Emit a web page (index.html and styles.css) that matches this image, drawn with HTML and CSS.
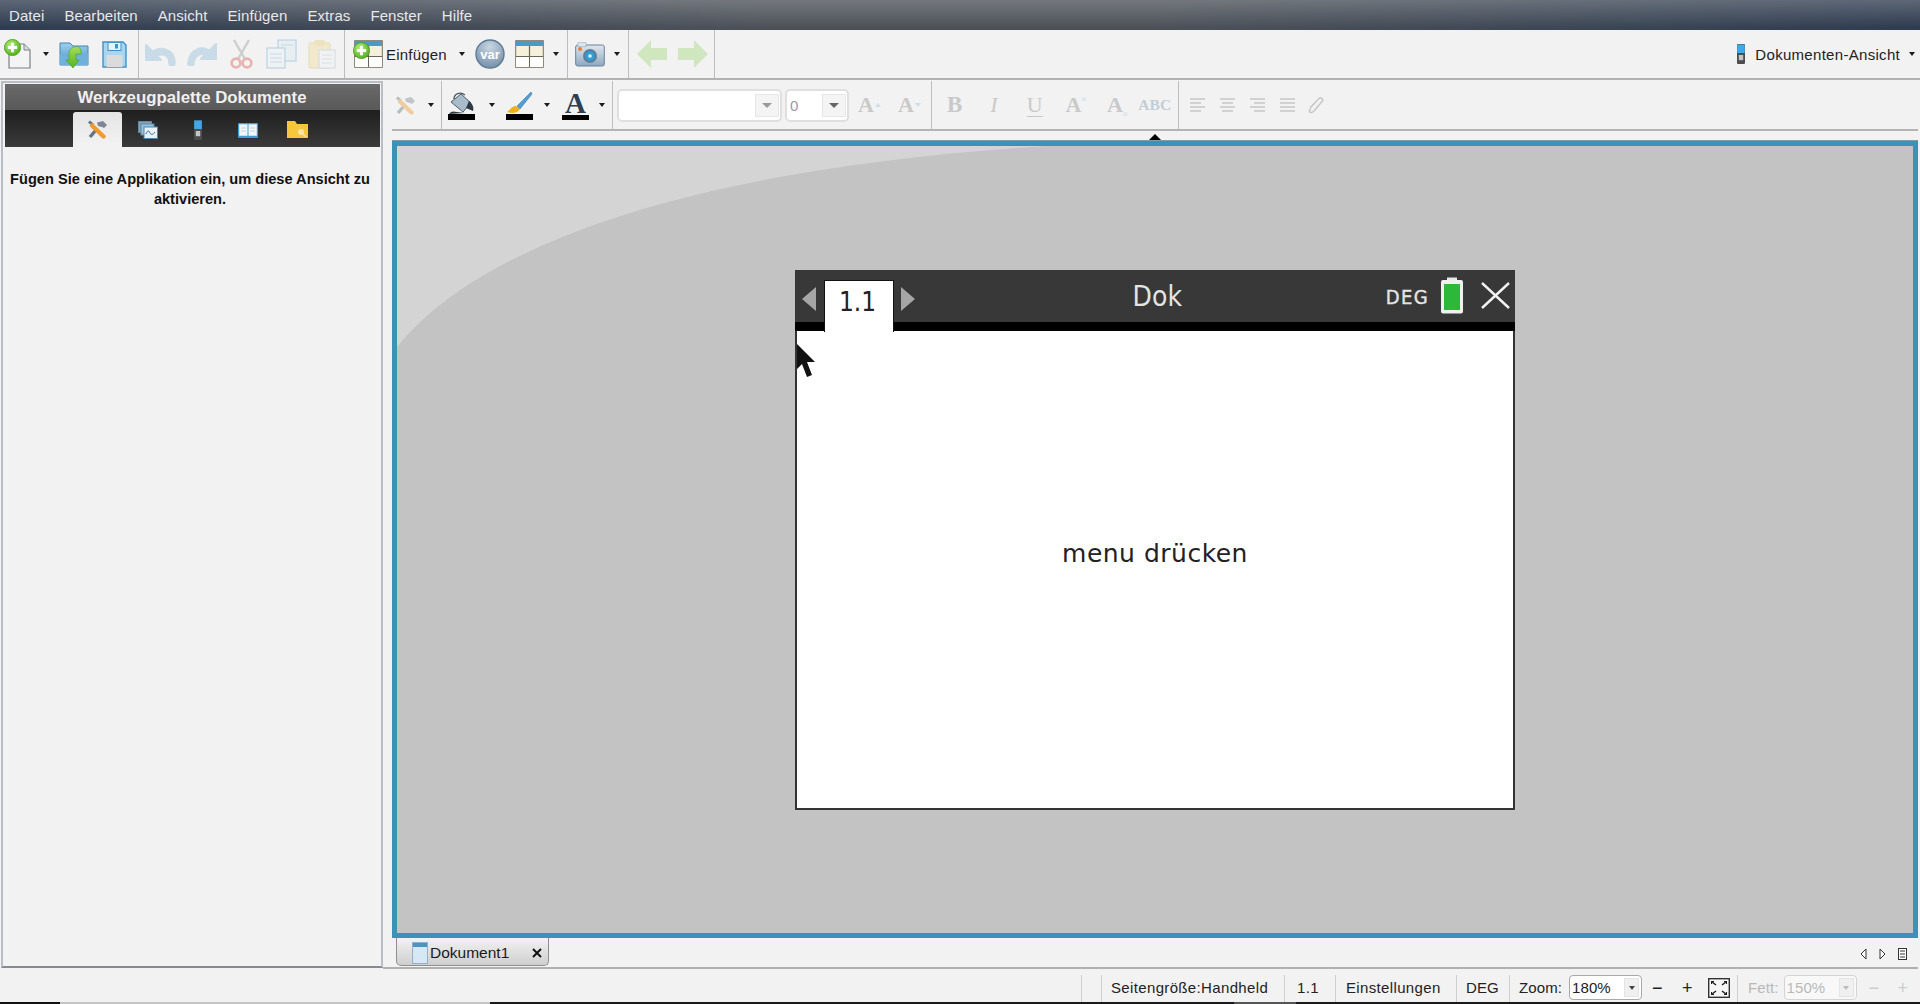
FILE: index.html
```html
<!DOCTYPE html>
<html lang="de">
<head>
<meta charset="utf-8">
<title>TI-Nspire Dokument</title>
<link rel="stylesheet" href="styles.css">
</head>
<body>
<svg class="defs" aria-hidden="true">
  <defs>
    <radialGradient id="gPlus" cx=".4" cy=".35" r=".7"><stop offset="0" stop-color="#b6ee7a"/><stop offset="1" stop-color="#4fae1d"/></radialGradient>
    <linearGradient id="gFolder" x1="0" y1="0" x2="0" y2="1"><stop offset="0" stop-color="#9fd0ec"/><stop offset="1" stop-color="#4392c6"/></linearGradient>
    <linearGradient id="gGreen" x1="0" y1="0" x2="0" y2="1"><stop offset="0" stop-color="#a6dc5e"/><stop offset="1" stop-color="#53b420"/></linearGradient>
    <radialGradient id="gVar" cx=".5" cy=".25" r=".8"><stop offset="0" stop-color="#c9d6e2"/><stop offset="1" stop-color="#6f8ba6"/></radialGradient>
    <linearGradient id="gCam" x1="0" y1="0" x2="0" y2="1"><stop offset="0" stop-color="#dfe7ee"/><stop offset="1" stop-color="#8ea8bf"/></linearGradient>
    <symbol id="plus" viewBox="0 0 16 16"><circle cx="8" cy="8" r="7.6" fill="url(#gPlus)" stroke="#4b9a1c" stroke-width=".8"/><path d="M8 3.600v8.800M3.600 8h8.800" stroke="#fff" stroke-width="2.600"/></symbol>
    <symbol id="grid" viewBox="0 0 29 28"><rect x=".7" y=".7" width="27.600" height="26.600" fill="#f5f0dc" stroke="#77705e"/><rect x="1" y="1" width="27" height="5" fill="#4a9ac8"/><path d="M1 16.500h27M14.500 6v21" stroke="#6b6553" stroke-width="1.200"/><rect x="1" y="17" width="13" height="10" fill="#fff"/><rect x="15" y="17" width="13" height="10" fill="#fff"/></symbol>
    <symbol id="device" viewBox="0 0 10 20"><rect x="1" y="0" width="8" height="20" rx="1" fill="#4d4d4d"/><rect x="1.200" y=".5" width="7.600" height="8.500" fill="#3fa9e6"/><rect x="2.800" y="11" width="4.400" height="5.200" fill="#c4c4c4"/></symbol>
    <symbol id="tools" viewBox="0 0 21 19"><path d="M3 17 9 10" stroke="#66737e" stroke-width="3.400"/><path d="M10 2.500 16 1l4 4-3 3-2-1-4-1z" fill="#7b8893"/><path d="M1 2.500 3 .5 7 4 5 6z" fill="#66737e"/><path d="M5 5.500 16.500 16.500" stroke="#ee9a2e" stroke-width="4.400" stroke-linecap="round"/></symbol>
  </defs>
</svg>

<nav class="menubar">
  <span class="menu">Datei</span><span class="menu">Bearbeiten</span><span class="menu">Ansicht</span><span class="menu">Einfügen</span><span class="menu">Extras</span><span class="menu">Fenster</span><span class="menu">Hilfe</span>
</nav>

<div class="toolbar top">
  <div class="group g1">
    <svg class="ic" width="27" height="30" viewBox="0 0 27 30"><path d="M5 5h15l6 6v18H5z" fill="#f4f4f4" stroke="#7d8186" stroke-width="1.200"/><path d="M20 5v6h6" fill="#dcdcdc" stroke="#7d8186"/><use href="#plus" x="0" y="0" width="17" height="17"/></svg>
    <span class="arr ml12"></span>
    <svg class="ic ml10" width="30" height="28" viewBox="0 0 30 28"><path d="M1 3h10l3 3h15v19H1z" fill="url(#gFolder)" stroke="#3f86b6"/><path d="M1 14c8 4 18 3 28-1v12H1z" fill="#6eb1da"/><path d="M15 7c5-2 8 2 7 7l-5 0v6h3l-6 8-7-8h3v-7c0-3 2-5 5-6z" fill="url(#gGreen)" stroke="#4a9f1e" stroke-width=".6"/></svg>
    <svg class="ic ml13" width="25" height="27" viewBox="0 0 25 27"><path d="M1 1h20l3 3v22H1z" fill="#a9d5f0" stroke="#3f92c9" stroke-width="1.400"/><rect x="6" y="1.500" width="13" height="8" fill="#e6f2fa" stroke="#3f92c9"/><rect x="13" y="3" width="3" height="4.500" fill="#3f92c9"/><rect x="4.500" y="14" width="16" height="12" fill="#dbdbdb"/></svg>
  </div>
  <div class="group g2 disabled">
    <svg class="ic" width="32" height="24" viewBox="0 0 32 24"><path d="M27 21C27 9 15 7 8 13" fill="none" stroke="#8fbdd6" stroke-width="7.500" stroke-linecap="round"/><path d="M1 3v15h15z" fill="#8fbdd6" stroke="#8fbdd6" stroke-linejoin="round" stroke-width="2"/></svg>
    <svg class="ic ml10" width="30" height="24" viewBox="0 0 30 24"><path d="M4 21C5 10 15 6 22 12" fill="none" stroke="#8fbdd6" stroke-width="7.500" stroke-linecap="round"/><path d="M29 2v15H14z" fill="#8fbdd6" stroke="#8fbdd6" stroke-linejoin="round" stroke-width="2"/></svg>
    <svg class="ic ml13 faint" width="23" height="30" viewBox="0 0 23 30"><path d="M4 1l11 19M19 1 8 20" stroke="#8d8d8d" stroke-width="2.400"/><circle cx="6" cy="24" r="4.400" fill="none" stroke="#d8473a" stroke-width="2.600"/><circle cx="17" cy="24" r="4.400" fill="none" stroke="#d8473a" stroke-width="2.600"/></svg>
    <svg class="ic ml13" width="31" height="30" viewBox="0 0 31 30"><rect x="12" y="1" width="18" height="21" fill="#dcebf5" stroke="#6fa8cf" stroke-width="1.200"/><rect x="1" y="9" width="18" height="20" fill="#edf4f9" stroke="#6fa8cf" stroke-width="1.200"/><path d="M4 15h12M4 19h12M4 23h12M15 6h12" stroke="#8ab6d4"/></svg>
    <svg class="ic ml11" width="28" height="30" viewBox="0 0 28 30"><rect x="1" y="4" width="21" height="25" rx="1" fill="#f4dc9a" stroke="#d9bd6a"/><rect x="6" y="1" width="11" height="6" rx="2" fill="#e8cf85"/><rect x="11" y="11" width="16" height="18" fill="#eef3f6" stroke="#a8bccb"/><path d="M14 16h10M14 20h10M14 24h10" stroke="#b8c8d4"/></svg>
  </div>
  <div class="group g3">
    <svg class="ic" width="30" height="29" viewBox="0 0 30 29"><svg x="1" y="0" width="29" height="28"><use href="#grid" width="29" height="28"/></svg><use href="#plus" x="0" y="2" width="17" height="17"/></svg>
    <span class="tlabel ml3">Einfügen</span>
    <span class="arr ml12"></span>
    <svg class="ic ml10" width="30" height="30" viewBox="0 0 30 30"><circle cx="15" cy="15" r="14" fill="url(#gVar)" stroke="#5d7a95" stroke-width="1.400"/><text x="15" y="20" class="vartext">var</text></svg>
    <svg class="ic ml10" width="29" height="28" viewBox="0 0 29 28"><use href="#grid" width="29" height="28"/></svg>
    <span class="arr ml9"></span>
  </div>
  <div class="group g4">
    <svg class="ic" width="30" height="25" viewBox="0 0 30 25"><rect x=".7" y="3" width="28.600" height="21" rx="2" fill="url(#gCam)" stroke="#6a8299"/><rect x="3" y=".8" width="8" height="4" fill="#dfe7ee" stroke="#8ea8bf" stroke-width=".6"/><circle cx="15" cy="14" r="7" fill="#5b7f9c"/><circle cx="15" cy="14" r="4.500" fill="#2f9ed6"/><circle cx="15" cy="14" r="1.800" fill="#dff3fb"/><circle cx="5" cy="7" r="2" fill="#ee7d3a"/></svg>
    <span class="arr ml9"></span>
  </div>
  <div class="group g5 disabled">
    <svg class="ic" width="32" height="30" viewBox="0 0 32 30"><path d="M15 1 1 15l14 14v-8h16V9H15z" fill="#a2d67a"/></svg>
    <svg class="ic ml9" width="32" height="30" viewBox="0 0 32 30"><path d="M17 1l14 14-14 14v-8H1V9h16z" fill="#a2d67a"/></svg>
  </div>
  <div class="docview">
    <svg class="ic" width="10" height="20" viewBox="0 0 10 20"><use href="#device" width="10" height="20"/></svg>
    <span class="tlabel wide ml9">Dokumenten-Ansicht</span>
    <span class="arr ml9"></span>
  </div>
</div>

<div class="main">
  <aside class="panel">
    <div class="panel-title">Werkzeugpalette Dokumente</div>
    <div class="panel-tabs">
      <div class="ptab active"><svg width="21" height="19" viewBox="0 0 21 19"><use href="#tools" width="21" height="19"/></svg></div>
      <div class="ptab"><svg width="20" height="18" viewBox="0 0 20 18"><rect x=".5" y=".5" width="13" height="11" fill="#7fa3bb" stroke="#5f8aa6"/><rect x="3" y="3" width="13" height="11" fill="#9fc0d4" stroke="#5f8aa6"/><rect x="6" y="6" width="13.500" height="11.500" fill="#e8f2f8" stroke="#4f86ad"/><path d="M8 13c2-5 3-3 4-1s3 2 5-1" fill="none" stroke="#35688c"/></svg></div>
      <div class="ptab"><svg width="10" height="20" viewBox="0 0 10 20"><use href="#device" width="10" height="20"/></svg></div>
      <div class="ptab"><svg width="20" height="16" viewBox="0 0 20 16"><rect x="0" y="1" width="20" height="15" rx="1" fill="#3f9ad8"/><path d="M1.200 2.300h8.300v11.500H1.200zM10.500 2.300h8.300v11.500h-8.300z" fill="#f3f6f8"/><path d="M3 6h5M3 9h5M12 6h5M12 9h5" stroke="#c5d2da"/></svg></div>
      <div class="ptab"><svg width="21" height="17" viewBox="0 0 21 17"><path d="M0 0h8l2 3h11v14H0z" fill="#f6c73c"/><circle cx="14" cy="11" r="3" fill="#f9e6a8"/><path d="M16 13l3 3" stroke="#f9e6a8" stroke-width="1.500"/></svg></div>
    </div>
    <p class="panel-msg">Fügen Sie eine Applikation ein, um diese Ansicht zu aktivieren.</p>
  </aside>

  <section class="work">
    <div class="toolbar second">
      <div class="group t1 disabled">
        <svg class="ic" width="21" height="19" viewBox="0 0 21 19"><use href="#tools" width="21" height="19"/></svg>
        <span class="arr ml12"></span>
      </div>
      <div class="group t2">
        <svg class="ic" width="27" height="29" viewBox="0 0 27 29"><path d="M3 11 13 3l10 9-8 9z" fill="#a8bccb" stroke="#4f5c66"/><path d="M6 8c0-5 6-8 11-4" fill="none" stroke="#4f5c66" stroke-width="1.400"/><path d="M21 10c4 3 5 7 4 10l-7-3z" fill="#2f3a42"/><path d="M1 23c2-3 4-3 8-2l8 1z" fill="#2f3a42"/><rect x="0" y="23" width="27" height="6" fill="#000"/></svg>
        <span class="arr ml14"></span>
        <svg class="ic ml11" width="27" height="29" viewBox="0 0 27 29"><path d="M25 1 11 15l3 3L26 3z" fill="#4f9ed6" stroke="#3f7eab" stroke-width=".6"/><path d="M10 15c-4 0-5 3-9 6 5 2 11 1 13-3z" fill="#eeb11e"/><rect x="0" y="23" width="27" height="6" fill="#000"/></svg>
        <span class="arr ml11"></span>
        <span class="colorA ml12">A</span>
        <span class="arr ml10"></span>
      </div>
      <div class="group t3">
        <div class="combo big"><span class="combo-val"></span><span class="combo-btn"><span class="arr grey"></span></span></div>
        <div class="combo small"><span class="combo-val">0</span><span class="combo-btn"><span class="arr darkgrey"></span></span></div>
        <span class="fmt fa ml9">A<span class="tri up"></span></span>
        <span class="fmt fa ml17">A<span class="tri down"></span></span>
      </div>
      <div class="group t4">
        <b class="fmt fb">B</b>
        <i class="fmt fi">I</i>
        <span class="fmt fu">U</span>
        <span class="fmt fs">A<sup>a</sup></span>
        <span class="fmt fs2">A<sub>a</sub></span>
        <span class="fmt fabc">ABC</span>
      </div>
      <div class="group t5">
        <svg class="al" width="15" height="14" viewBox="0 0 15 14"><path d="M0 1h15M0 5h11M0 9h15M0 13h11" stroke="#c6c6c6" stroke-width="1.300"/></svg>
        <svg class="al" width="15" height="14" viewBox="0 0 15 14"><path d="M0 1h15M2 5h11M0 9h15M2 13h11" stroke="#c6c6c6" stroke-width="1.300"/></svg>
        <svg class="al" width="15" height="14" viewBox="0 0 15 14"><path d="M0 1h15M4 5h11M0 9h15M4 13h11" stroke="#c6c6c6" stroke-width="1.300"/></svg>
        <svg class="al" width="15" height="14" viewBox="0 0 15 14"><path d="M0 1h15M0 5h15M0 9h15M0 13h15" stroke="#c6c6c6" stroke-width="1.300"/></svg>
        <svg class="al lnk" width="17" height="18" viewBox="0 0 17 18"><path d="M2 12 11 2.500c2-2 5 1 3 3L6 15c-2 2-4 2-4.500.5S2 13 3 12" fill="none" stroke="#c6c6c6" stroke-width="1.500"/></svg>
      </div>
    </div>

    <div class="notch"><span class="notch-tri"></span></div>

    <div class="frame">
      <svg class="swoosh" width="660" height="210" viewBox="0 0 660 210"><path d="M0 0H650C320 20 90 90 0 201z" fill="#d4d4d4"/></svg>
      <div class="calc">
        <div class="calc-head">
          <span class="pg-arrow left"></span>
          <span class="pg-tab">1.1</span>
          <span class="pg-arrow right"></span>
          <span class="calc-title">Dok</span>
          <span class="calc-deg">DEG</span>
          <svg class="battery" width="24" height="37" viewBox="0 0 24 37"><rect x="7" y=".5" width="10" height="4" fill="#e8e8e8"/><rect x="1" y="3" width="22" height="33.500" rx="2" fill="#f0f0f0"/><rect x="4" y="7" width="16" height="26" fill="#2cb93a"/></svg>
          <svg class="calc-x" width="29" height="27" viewBox="0 0 29 27"><path d="M1 1l27 25M28 1 1 26" stroke="#f2f2f2" stroke-width="2.400"/></svg>
        </div>
        <div class="calc-body">menu drücken</div>
        <svg class="cursor" width="20" height="34" viewBox="0 0 20 34"><path d="M1 0v25l5-5 5 13 5-2-5-13h8z" fill="#111"/></svg>
      </div>
    </div>

    <div class="tabstrip">
      <div class="doctab">
        <svg width="16" height="22" viewBox="0 0 16 22"><rect x=".5" y=".5" width="15" height="21" fill="#d6e8f4" stroke="#8fb2c9"/><rect x="1" y="1" width="14" height="4" fill="#4d93bf"/></svg>
        <span class="doctab-name">Dokument1</span>
        <svg class="doctab-x" width="10" height="10" viewBox="0 0 10 10"><path d="M1 1l8 8M9 1 1 9" stroke="#111" stroke-width="2"/></svg>
      </div>
      <div class="tabnav">
        <svg width="7" height="12" viewBox="0 0 7 12"><path d="M6 1 1 6l5 5z" fill="#fff" stroke="#333"/></svg>
        <svg width="7" height="12" viewBox="0 0 7 12"><path d="M1 1l5 5-5 5z" fill="#fff" stroke="#333"/></svg>
        <svg width="9" height="12" viewBox="0 0 9 12"><rect x=".5" y=".5" width="8" height="11" fill="#fff" stroke="#333"/><path d="M2 3h5M2 6h5M2 9h5" stroke="#333"/></svg>
      </div>
    </div>
  </section>
</div>

<footer class="status">
  <span class="cell c0"></span>
  <span class="cell c1">Seitengröße:Handheld</span>
  <span class="cell c2">1.1</span>
  <span class="cell c3">Einstellungen</span>
  <span class="cell c4">DEG</span>
  <div class="cell c5">
    <span>Zoom:</span>
    <div class="scombo"><span class="scombo-val">180%</span><span class="scombo-btn"><span class="arr tiny"></span></span></div>
    <span class="zbtn zminus">−</span>
    <span class="zbtn zplus">+</span>
    <svg class="zfit" width="22" height="20" viewBox="0 0 22 20"><rect x=".7" y=".7" width="20.600" height="18.600" fill="#f5f5f5" stroke="#333" stroke-width="1.400"/><path d="M4 4l4 3M18 4l-4 3M4 16l4-3M18 16l-4-3" stroke="#222" stroke-width="1.500"/><path d="M3 3h3v1H4v2H3zM19 3h-3v1h2v2h1zM3 17h3v-1H4v-2H3zM19 17h-3v-1h2v-2h1z" fill="#222"/></svg>
  </div>
  <div class="cell c6 off">
    <span>Fett:</span>
    <div class="scombo off"><span class="scombo-val">150%</span><span class="scombo-btn"><span class="arr tiny g"></span></span></div>
    <span class="zbtn zminus2">−</span>
    <span class="zbtn zplus2">+</span>
  </div>
</footer>
<div class="edge"><span class="e1"></span><span class="e2"></span><span class="e3"></span><span class="e4"></span><span class="e5"></span></div>
</body>
</html>
```
FILE: styles.css
```css
* { box-sizing: border-box; }
html, body { margin: 0; padding: 0; }
body {
  width: 1920px;
  height: 1004px;
  overflow: hidden;
  background: #f2f2f2;
  font-family: "Liberation Sans", Arial, sans-serif;
  color: #222;
}
.defs { display: block; width: 0; height: 0; }

/* menu */
.menubar {
  height: 30px;
  display: flex;
  align-items: center;
  background:
    linear-gradient(180deg, rgba(255,255,255,.22) 0, rgba(255,255,255,0) 92%),
    linear-gradient(90deg, #2f3c50 0, #3f4855 18%, #4d5259 40%, #4d5259 60%, #3a4554 85%, #2f3c50 100%);
}
.menu {
  padding: 0 10px;
  font-size: 15px;
  letter-spacing: .08px;
  color: #e6e8ea;
}
.menu:first-child { padding-left: 9px; }

/* toolbars */
.toolbar { display: flex; align-items: stretch; }
.toolbar.top { height: 50px; border-bottom: 2px solid #b2b2b2; }
.toolbar.second { height: 51px; padding-top: 1px; border-bottom: 2px solid #b4b4b4; }
.group { display: flex; align-items: center; border-right: 1.5px solid #bdbdbd; flex: none; }
.ic { display: block; flex: none; }
.disabled .ic { opacity: .42; }
.disabled .ic.faint { opacity: .36; }
.g1 { width: 139px; padding-left: 4px; }
.g2 { width: 206px; padding-left: 6px; }
.g3 { width: 223px; padding-left: 8px; }
.g4 { width: 61px; padding-left: 7px; }
.g5 { width: 86px; padding-left: 7px; }
.ml3 { margin-left: 3px; }
.ml9 { margin-left: 9px; }
.ml10 { margin-left: 10px; }
.ml11 { margin-left: 11px; }
.ml12 { margin-left: 12px; }
.ml13 { margin-left: 13px; }
.ml14 { margin-left: 14px; }
.ml17 { margin-left: 17px; }
.arr {
  display: inline-block;
  flex: none;
  width: 0;
  height: 0;
  border-left: 3.5px solid transparent;
  border-right: 3.5px solid transparent;
  border-top: 4px solid #1c1c1c;
}
.arr.grey { border-top-color: #9a9a9a; border-left-width: 5px; border-right-width: 5px; border-top-width: 5px; }
.arr.darkgrey { border-top-color: #666; border-left-width: 5px; border-right-width: 5px; border-top-width: 5px; }
.arr.tiny { border-left-width: 3px; border-right-width: 3px; border-top-width: 4px; border-top-color: #444; }
.arr.tiny.g { border-top-color: #bbb; }
.tlabel { font-size: 15px; letter-spacing: .2px; color: #222; }
.tlabel.wide { letter-spacing: .3px; }
.vartext { font: bold 13px "Liberation Sans", sans-serif; fill: #fff; text-anchor: middle; }
.docview { display: flex; align-items: center; margin-left: auto; padding-right: 5px; }

/* layout */
.main { display: flex; height: 889px; }
.panel {
  width: 382px;
  height: 887px;
  margin: 1px 0 0 1px;
  flex: none;
  padding: 1px 1px 0 2px;
  background: #f2f2f2;
  border: 2px solid #b9bdc4;
  border-bottom-color: #858a93;
}
.panel-title {
  height: 26px;
  background: linear-gradient(#6a6a6a, #595959);
  color: #f0f0f0;
  font-size: 16.8px;
  font-weight: bold;
  line-height: 28px;
  text-align: center;
  padding-right: 1px;
}
.panel-tabs {
  height: 37px;
  padding: 2px 0 0 68px;
  display: flex;
  align-items: stretch;
  background: linear-gradient(#1f1f1f, #3a3a3a);
}
.ptab { width: 49px; margin-right: 1px; display: flex; align-items: center; justify-content: center; }
.ptab.active { background: linear-gradient(#e4e4e4, #f3f3f3); border-radius: 3px 3px 0 0; }
.panel-msg {
  margin: 22px 0 0;
  padding: 0 5px 0 0;
  font-size: 14.6px;
  font-weight: bold;
  line-height: 20px;
  text-align: center;
  color: #111;
}
.work { margin-left: 9px; width: 1526px; flex: none; display: flex; flex-direction: column; }

/* second toolbar */
.t1 { width: 50px; padding-left: 3px; }
.t2 { width: 171px; padding-left: 6px; }
.t3 { width: 319px; padding-left: 4px; }
.t4 { width: 247px; }
.t5 { border-right: 0; padding-left: 11px; }
.colorA {
  width: 27px;
  height: 29px;
  border-bottom: 5px solid #000;
  font: bold 29px/25px "Liberation Serif", serif;
  color: #2f3e50;
  text-align: center;
  flex: none;
}
.combo {
  display: flex;
  height: 33px;
  background: #fff;
  border: 2px solid #dfdfdf;
  border-radius: 5px;
  flex: none;
  padding: 3px 1px 3px 3px;
  justify-content: space-between;
  align-items: stretch;
}
.combo.big { width: 165px; }
.combo.small { width: 64px; margin-left: 3px; }
.combo-val { font-size: 15px; line-height: 24px; color: #9a9a9a; }
.combo-btn {
  width: 24px;
  background: #f4f4f4;
  border: 1px solid #e6e6e6;
  display: flex;
  align-items: center;
  justify-content: center;
}
.fmt { color: #c9c9c9; flex: none; }
.fa { font: bold 22px/1 "Liberation Serif", serif; display: inline-flex; align-items: center; }
.tri { display: inline-block; width: 0; height: 0; margin-left: 1px; border-left: 3.5px solid transparent; border-right: 3.5px solid transparent; }
.tri.up { border-bottom: 4px solid #c9dfec; }
.tri.down { border-top: 4px solid #c9dfec; }
.fb { margin-left: 15px; font: bold 23px "Liberation Serif", serif; }
.fi { margin-left: 28px; font: italic 22px "Liberation Serif", serif; }
.fu { margin-left: 29px; font: 22px/23px "Liberation Serif", serif; border-bottom: 1.5px solid #c9c9c9; }
.fs { margin-left: 23px; font: bold 22px "Liberation Serif", serif; display: flex; }
.fs sup { font-size: 9px; line-height: 12px; color: #d9e5ee; vertical-align: baseline; }
.fs2 { margin-left: 21px; font: bold 22px "Liberation Serif", serif; display: flex; align-items: flex-end; }
.fs2 sub { font-size: 9px; line-height: 9px; color: #d9e5ee; }
.fabc { margin-left: 11px; font: bold 15.5px "Liberation Serif", serif; color: #c2cdd6; }
.al { margin-right: 15px; flex: none; }
.lnk { margin-left: -2px; }

/* notch */
.notch { height: 10px; display: flex; justify-content: center; align-items: flex-end; flex: none; }
.notch-tri { width: 0; height: 0; border-left: 7px solid transparent; border-right: 7px solid transparent; border-bottom: 7px solid #000; }

/* document frame */
.frame {
  position: relative;
  height: 797px;
  flex: none;
  border: 5px solid #3a92b7;
  box-shadow: 0 -1px 0 #8c979e;
  background: #c3c3c3;
  display: flex;
  align-items: center;
  justify-content: center;
  overflow: hidden;
}
.swoosh { position: absolute; left: 0; top: 0; }
.calc {
  position: relative;
  width: 720px;
  height: 540px;
  display: flex;
  flex-direction: column;
  font-family: "DejaVu Sans Condensed", "DejaVu Sans", sans-serif;
}
.calc-head {
  height: 61px;
  flex: none;
  padding: 0 5px 0 7px;
  display: flex;
  align-items: flex-start;
  background: #383838;
  border-bottom: 9px solid #000;
  color: #e4e4e4;
}
.pg-arrow { width: 0; height: 0; margin-top: 17px; border-top: 12px solid transparent; border-bottom: 12px solid transparent; }
.pg-arrow.left { border-right: 14px solid #a6a6a6; }
.pg-arrow.right { border-left: 14px solid #a6a6a6; margin-left: 7px; }
.pg-tab {
  width: 70px;
  height: 52px;
  margin: 10px 0 -1px 8px;
  padding-right: 3px;
  background: #fff;
  border: solid #111;
  border-width: 1px 1px 0;
  color: #222;
  font-size: 26px;
  line-height: 42px;
  text-align: center;
  position: relative;
  z-index: 1;
}
.calc-title { flex: 1; margin-top: 9px; padding-left: 14px; font-size: 28px; line-height: 36px; text-align: center; }
.calc-deg { margin-top: 15px; font-size: 20px; line-height: 24px; letter-spacing: 1.4px; color: #e4e4e4; -webkit-text-stroke: .4px #e4e4e4; }
.battery { margin: 7px 0 0 11px; flex: none; }
.calc-x { margin: 12px 0 0 17px; flex: none; }
.calc-body {
  flex: 1;
  padding-bottom: 32px;
  background: #fff;
  border: solid #333;
  border-width: 0 2px 2px;
  display: flex;
  align-items: center;
  justify-content: center;
  font-family: "DejaVu Sans", sans-serif;
  font-size: 25px;
  letter-spacing: .5px;
  color: #222;
}
.cursor { position: absolute; left: 1px; top: 74px; }

/* doc tabs */
.tabstrip {
  height: 31px;
  flex: none;
  margin-left: -9px;
  padding-left: 9px;
  display: flex;
  align-items: flex-start;
  border-bottom: 2px solid #b0b0b0;
}
.doctab {
  width: 153px;
  height: 28px;
  margin-left: 4px;
  padding: 2px 0 0 15px;
  display: flex;
  align-items: center;
  background: linear-gradient(#f2f2f2, #cfcfcf);
  border: 1px solid #8f8f8f;
  border-top: 0;
  border-radius: 0 0 5px 5px;
}
.doctab-name { margin-left: 2px; font-size: 15.5px; color: #1a1a1a; }
.doctab-x { margin-left: auto; margin-right: 6px; }
.tabnav { margin-left: auto; margin-right: 11px; margin-top: 10px; display: flex; gap: 12px; align-items: center; }

/* status bar */
.status { height: 33px; display: flex; align-items: stretch; font-size: 15px; color: #222; }
.cell {
  display: flex;
  align-items: center;
  flex: none;
  margin-top: 6px;
  padding-bottom: 2px;
  border-left: 1px solid #cfcfcf;
  letter-spacing: .35px;
}
.c0 { margin-left: 1081px; width: 20px; }
.c1 { width: 183px; padding-left: 9px; }
.c2 { width: 51px; padding-left: 12px; }
.c3 { width: 121px; padding-left: 10px; }
.c4 { width: 53px; padding-left: 9px; letter-spacing: .1px; }
.c5 { width: 228px; padding-left: 9px; letter-spacing: .1px; }
.c6 { flex: 1; padding-left: 10px; letter-spacing: .1px; }
.off { color: #b8b8b8; }
.scombo {
  width: 73px;
  height: 25px;
  margin-left: 7px;
  display: flex;
  justify-content: space-between;
  align-items: stretch;
  background: #fff;
  border: 1px solid #a9a9a9;
  border-radius: 4px;
  padding: 2px;
}
.scombo.off { margin-left: 5px; border-color: #d4d4d4; background: #f8f8f8; }
.scombo-val { line-height: 19px; }
.scombo-btn { width: 15px; background: #f0f0f0; border: 1px solid #e4e4e4; display: flex; align-items: center; justify-content: center; }
.zbtn { font-size: 18px; line-height: 1; width: 10px; text-align: center; }
.zminus { margin-left: 10px; }
.zplus { margin-left: 20px; }
.zfit { margin-left: 16px; flex: none; }
.zminus2 { margin-left: 12px; color: #ccc; }
.zplus2 { margin-left: 19px; color: #ccc; }

/* bottom edge */
.edge { height: 2px; display: flex; }
.edge span { display: block; height: 2px; flex: none; }
.e1 { width: 60px; background: #111; }
.e2 { width: 430px; background: #c4c4c4; }
.e3 { width: 744px; background: #1a1a1a; }
.e4 { width: 62px; background: #555; }
.e5 { width: 624px; background: #1a1a1a; }
```
